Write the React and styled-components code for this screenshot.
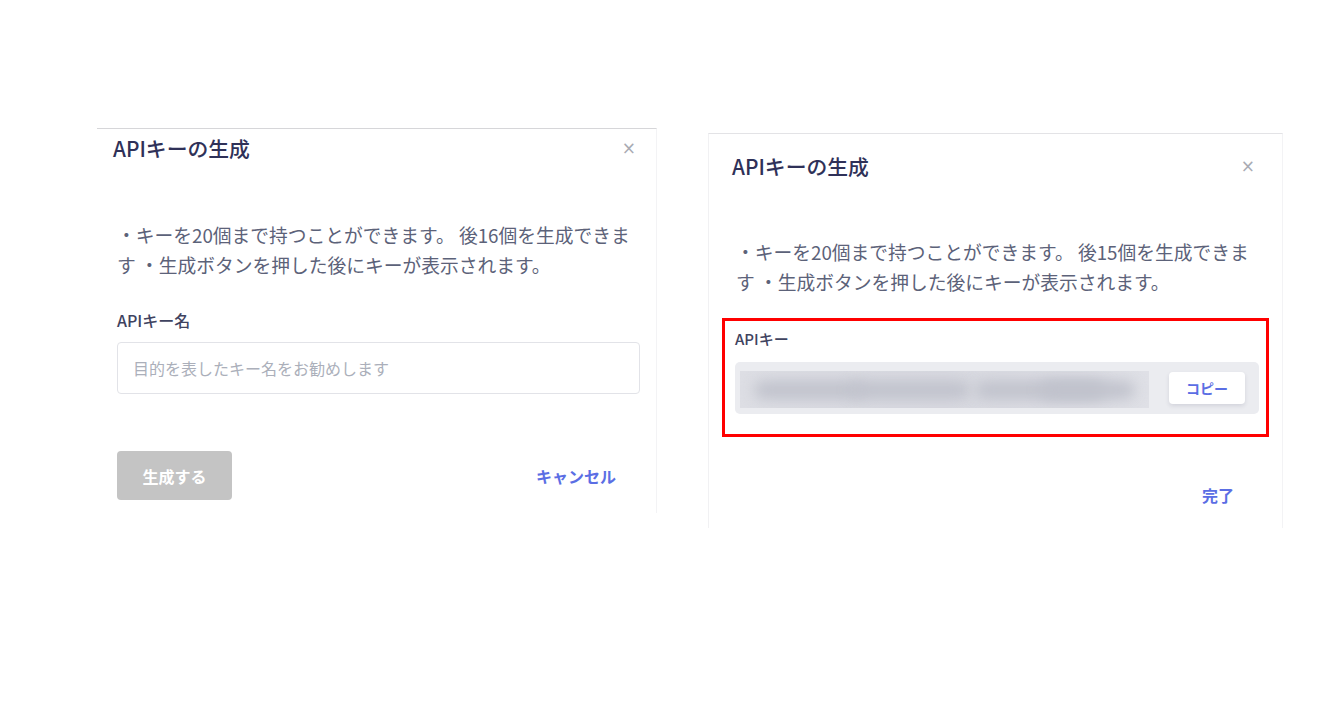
import styled, { createGlobalStyle } from "styled-components";

const GlobalStyle = createGlobalStyle`
  html, body {
    margin: 0;
    padding: 0;
    background: #ffffff;
  }
  body {
    font-family: "Noto Sans CJK JP", "Noto Sans", sans-serif;
    -webkit-font-smoothing: antialiased;
  }
`;

const Page = styled.div`
  display: flex;
  align-items: flex-start;
  gap: 51px;
  padding-left: 97px;
  width: 1323px;
  height: 711px;
  box-sizing: border-box;
`;

const Modal = styled.section`
  width: ${(p) => p.width}px;
  margin-top: ${(p) => p.top}px;
  box-sizing: border-box;
  background: #fff;
  border-top: 1px solid ${(p) => p.topLine};
  border-left: ${(p) => (p.sideLeft ? "1px solid #f1f1f3" : "none")};
  border-right: 1px solid #f3f3f5;
  padding-bottom: ${(p) => p.bottom}px;
`;

const Header = styled.header`
  display: flex;
  align-items: center;
  justify-content: space-between;
  padding: ${(p) => p.pad};
`;

const Title = styled.h2`
  margin: 0;
  font-size: 20.8px;
  line-height: 28px;
  font-weight: 500;
  color: #2f3158;
`;

const Close = styled.button`
  border: none;
  background: none;
  padding: 0;
  color: #a9abb3;
  font-size: 17px;
  line-height: 20px;
  font-family: "DejaVu Sans", sans-serif;
  cursor: pointer;
`;

const Body = styled.div`
  padding: ${(p) => p.pad};
`;

const Notice = styled.p`
  margin: 0;
  font-size: 18.75px;
  line-height: 29.5px;
  color: #5c6279;
`;

const Field = styled.div`
  margin-top: 30px;
`;

const Label = styled.label`
  display: block;
  font-size: ${(p) => p.size || 16}px;
  line-height: 22px;
  font-weight: 500;
  color: #3f4360;
`;

const TextInput = styled.input`
  display: block;
  width: 100%;
  box-sizing: border-box;
  height: 52px;
  margin-top: 11px;
  padding: 0 15px;
  border: 1px solid #e2e3e8;
  border-radius: 4px;
  font-family: inherit;
  font-size: 16px;
  color: #333;
  outline: none;
  &::placeholder {
    color: #abafba;
  }
`;

const Footer = styled.footer`
  display: flex;
  align-items: center;
  justify-content: ${(p) => p.justify};
  padding: ${(p) => p.pad};
`;

const PrimaryButton = styled.button`
  width: 115px;
  height: 49px;
  border: none;
  border-radius: 4px;
  background: #c4c4c4;
  color: #ffffff;
  font-family: inherit;
  font-size: 16px;
  font-weight: 700;
  cursor: default;
`;

const TextButton = styled.button`
  height: ${(p) => p.h}px;
  padding: 0 ${(p) => p.padRight}px 0 16px;
  border: none;
  background: none;
  color: #5b6ee4;
  font-family: inherit;
  font-size: 16px;
  font-weight: 700;
  cursor: pointer;
`;

const Highlight = styled.div`
  margin: 22px -10px 0 -14px;
  padding: 7px 7px 20px 10px;
  border: 3px solid #ff0000;
`;

const KeyBox = styled.div`
  display: flex;
  align-items: center;
  gap: 20px;
  height: 52px;
  margin-top: 12px;
  padding: 0 14px 0 5px;
  border-radius: 5px;
  background: #ebecf0;
`;

const Blurred = styled.div`
  position: relative;
  flex: 1;
  height: 37px;
  margin-top: 3px;
  overflow: hidden;
  background: linear-gradient(90deg, #dddee4 0%, #d8d9e0 50%, #dfe0e6 100%);
`;

const Blob = styled.div`
  position: absolute;
  top: 10px;
  left: ${(p) => p.x}px;
  width: ${(p) => p.w}px;
  height: 18px;
  border-radius: 9px;
  background: #c0c2cc;
  filter: blur(7px);
`;

const CopyButton = styled.button`
  width: 76px;
  height: 32px;
  border: none;
  border-radius: 4px;
  background: #ffffff;
  box-shadow: 0 2px 4px rgba(40, 44, 70, 0.12);
  color: #5b6ee4;
  font-family: inherit;
  font-size: 14px;
  font-weight: 700;
`;

const blobs = [
  { x: 14, w: 110 },
  { x: 110, w: 120 },
  { x: 235, w: 130 },
  { x: 300, w: 95 },
];

export default function App() {
  return (
    <>
      <GlobalStyle />
      <Page>
        <Modal width={560} top={128} topLine="#d6d6d9" bottom={13}>
          <Header pad="5px 20px 0 16px">
            <Title>APIキーの生成</Title>
            <Close aria-label="close">×</Close>
          </Header>
          <Body pad="58px 16px 0 20px">
            <Notice>
              ・キーを20個まで持つことができます。 後16個を生成できます ・生成ボタンを押した後にキーが表示されます。
            </Notice>
            <Field>
              <Label>APIキー名</Label>
              <TextInput placeholder="目的を表したキー名をお勧めします" />
            </Field>
          </Body>
          <Footer justify="space-between" pad="57px 0 0 20px">
            <PrimaryButton>生成する</PrimaryButton>
            <TextButton h={49} padRight={40}>
              キャンセル
            </TextButton>
          </Footer>
        </Modal>

        <Modal width={575} top={133} topLine="#e3e3e6" sideLeft bottom={11}>
          <Header pad="18px 27px 0 23px">
            <Title>APIキーの生成</Title>
            <Close aria-label="close">×</Close>
          </Header>
          <Body pad="57px 23px 0 27px">
            <Notice>
              ・キーを20個まで持つことができます。 後15個を生成できます ・生成ボタンを押した後にキーが表示されます。
            </Notice>
            <Highlight>
              <Label size={15}>APIキー</Label>
              <KeyBox>
                <Blurred>
                  {blobs.map((b, i) => (
                    <Blob key={i} x={b.x} w={b.w} />
                  ))}
                </Blurred>
                <CopyButton>コピー</CopyButton>
              </KeyBox>
            </Highlight>
          </Body>
          <Footer justify="flex-end" pad="36px 0 0 0">
            <TextButton h={44} padRight={48}>
              完了
            </TextButton>
          </Footer>
        </Modal>
      </Page>
    </>
  );
}
